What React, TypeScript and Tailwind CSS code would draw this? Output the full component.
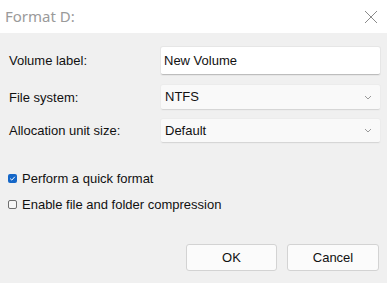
import React from 'react';

// Small chevron used by the drop-down fields
const Chevron: React.FC = () => (
  <svg width="8" height="5" viewBox="0 0 8 5" className="text-[#9a9a9a]">
    <polyline points="1,1 4,4 7,1" fill="none" stroke="currentColor" strokeWidth="1" />
  </svg>
);

const SelectBox: React.FC<{ value: string; height: string }> = ({ value, height }) => (
  <div
    className={`${height} flex items-center justify-between pl-[4px] pr-[8px] bg-[#f9f9f9] border-b border-[#d6d6d6] shadow-[0_0_0_1px_#ececec] rounded-[2px]`}
  >
    <span className="text-[13px] text-[#111]">{value}</span>
    <Chevron />
  </div>
);

const Checkbox: React.FC<{ checked?: boolean; label: string }> = ({ checked = false, label }) => (
  <div className="flex items-center gap-[5px] leading-[19px]">
    {checked ? (
      <div className="w-[9px] h-[9px] rounded-[2px] bg-[#1567c8] flex items-center justify-center">
        <svg width="7" height="7" viewBox="0 0 7 7">
          <polyline points="1.2,3.6 2.8,5.1 5.8,1.8" fill="none" stroke="white" strokeWidth="1" />
        </svg>
      </div>
    ) : (
      <div className="w-[9px] h-[9px] rounded-[2px] border border-[#6f6f6f] bg-[#f7f7f7]" />
    )}
    <span className="text-[13px] text-[#111]">{label}</span>
  </div>
);

const App: React.FC = () => {
  return (
    <div
      className="w-[387px] h-[283px] bg-[#f0f0f0] flex flex-col overflow-hidden"
      style={{ fontFamily: '"Liberation Sans", Arial, sans-serif' }}
    >
      {/* Title bar */}
      <div className="h-[33px] bg-white flex items-center justify-between pl-[5px] pr-[9px]">
        <span
          className="text-[15px] text-[#9a9a9a]"
          style={{ fontFamily: '"Noto Sans", "Open Sans", sans-serif' }}
        >
          Format D:
        </span>
        <svg width="14" height="14" viewBox="0 0 14 14" className="text-[#8a8a8a] mt-[1px]">
          <path d="M1 1 L13 13 M13 1 L1 13" stroke="currentColor" strokeWidth="1" />
        </svg>
      </div>

      {/* Form */}
      <div className="pl-[9px] pr-[7px] pt-[14px] flex flex-col">
        <div className="grid grid-cols-[152px_219px] items-center">
          <span className="text-[13px] text-[#111]">Volume label:</span>
          <div className="h-[28px] bg-white flex items-center pl-[3px] border-b border-[#bdbdbd] shadow-[0_0_0_1px_#e6e6e6] rounded-[2px]">
            <span className="text-[13px] text-[#111]">New Volume</span>
          </div>
        </div>
        <div className="grid grid-cols-[152px_219px] items-center mt-[10px]">
          <span className="text-[13px] text-[#111]">File system:</span>
          <SelectBox value="NTFS" height="h-[25px]" />
        </div>
        <div className="grid grid-cols-[152px_219px] items-center mt-[9px]">
          <span className="text-[13px] text-[#111]">Allocation unit size:</span>
          <SelectBox value="Default" height="h-[24px]" />
        </div>

        <div className="flex flex-col gap-[7px] mt-[26px] -ml-px">
          <Checkbox checked label="Perform a quick format" />
          <Checkbox label="Enable file and folder compression" />
        </div>
      </div>

      {/* Buttons */}
      <div className="flex justify-end gap-[10px] pr-[8px] mt-auto mb-[12px]">
        <button className="w-[91px] h-[27px] bg-[#fbfbfb] border border-[#d3d3d3] rounded-[3px] text-[13px] text-[#111]">
          OK
        </button>
        <button className="w-[92px] h-[27px] bg-[#fbfbfb] border border-[#d3d3d3] rounded-[3px] text-[13px] text-[#111]">
          Cancel
        </button>
      </div>
    </div>
  );
};

export default App;
